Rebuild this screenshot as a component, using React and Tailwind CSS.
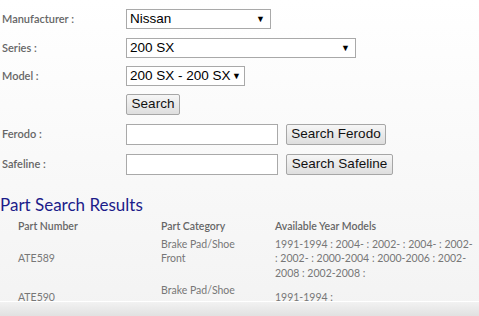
import React from 'react';

function FakeSelect({ value, width, pr = 'pr-[5px]' }) {
  return (
    <div
      className={`flex h-[20px] items-center justify-between whitespace-nowrap border border-[#a9a9a9] bg-white pl-[3px] text-[13.5px] text-black ${pr} ${width}`}
      style={{ fontFamily: '"Liberation Sans", Arial, sans-serif' }}
    >
      <span className="leading-none">{value}</span>
      <span className="text-[9px] leading-none">▼</span>
    </div>
  );
}

function Button({ children, width }) {
  return (
    <div
      className={`flex h-[21px] items-center justify-center whitespace-nowrap rounded-[2px] border border-[#a6a6a6] bg-gradient-to-b from-[#f6f6f6] to-[#dedede] text-[13.5px] text-[#111] ${width}`}
      style={{ fontFamily: '"Liberation Sans", Arial, sans-serif' }}
    >
      {children}
    </div>
  );
}

function TextBox() {
  return <div className="h-[21px] w-[152px] border border-[#a9a9a9] bg-white" />;
}

function Row({ label, children, height }) {
  return (
    <div className={`flex items-center ${height}`}>
      <div className="w-[126px] pl-[2px] text-[11px] font-semibold text-[#666]">{label}</div>
      <div className="flex items-center gap-[8px]">{children}</div>
    </div>
  );
}

export default function App() {
  const results = [
    {
      part: 'ATE589',
      category: ['Brake Pad/Shoe', 'Front'],
      years: '1991-1994 : 2004- : 2002- : 2004- : 2002- : 2002- : 2000-2004 : 2000-2006 : 2002-2008 : 2002-2008 :'
    },
    {
      part: 'ATE590',
      category: ['Brake Pad/Shoe', 'Rear'],
      years: '1991-1994 :'
    }
  ];

  return (
    <div
      className="relative h-[316px] w-[479px] overflow-hidden bg-gradient-to-b from-white to-[#f3f3f3]"
      style={{ fontFamily: 'Lato, "Open Sans", sans-serif' }}
    >
      <div className="pt-[9px]">
        <Row label="Manufacturer :" height="h-[20px]">
          <FakeSelect value="Nissan" width="w-[145px]" />
        </Row>
        <div className="h-[9px]" />
        <Row label="Series :" height="h-[20px]">
          <FakeSelect value="200 SX" width="w-[230px]" />
        </Row>
        <div className="h-[8px]" />
        <Row label="Model :" height="h-[20px]">
          <FakeSelect value="200 SX - 200 SX" width="w-[119px]" pr="pr-[3px]" />
        </Row>
        <div className="h-[8px]" />
        <Row label="" height="h-[21px]">
          <Button width="w-[54px]">Search</Button>
        </Row>
        <div className="h-[9px]" />
        <Row label="Ferodo :" height="h-[21px]">
          <TextBox />
          <Button width="w-[100px]">Search Ferodo</Button>
        </Row>
        <div className="h-[9px]" />
        <Row label="Safeline :" height="h-[21px]">
          <TextBox />
          <Button width="w-[107px]">Search Safeline</Button>
        </Row>
      </div>

      <h2 className="mt-[19px] text-[17px] leading-[22px] text-[#1c1c8a]">Part Search Results</h2>

      <div className="mt-[3px] grid grid-cols-[161px_114px_1fr] text-[10.5px] leading-[14.5px] text-[#777]">
        <div className="pl-[18px] font-semibold text-[#666]">Part Number</div>
        <div className="font-semibold text-[#666]">Part Category</div>
        <div className="font-semibold text-[#666]">Available Year Models</div>
        {results.map((r) => (
          <React.Fragment key={r.part}>
            <div className="flex items-center pt-[3px] pl-[18px]">{r.part}</div>
            <div className="pt-[3px]">
              {r.category[0]}
              <br />
              {r.category[1]}
            </div>
            <div className="flex items-center pt-[3px] pr-[2px]">{r.years}</div>
          </React.Fragment>
        ))}
      </div>

      <div className="absolute bottom-0 left-0 h-[15px] w-full border-t border-white bg-gradient-to-b from-[#f2f2f2] to-[#e1e1e1]" />
    </div>
  );
}
